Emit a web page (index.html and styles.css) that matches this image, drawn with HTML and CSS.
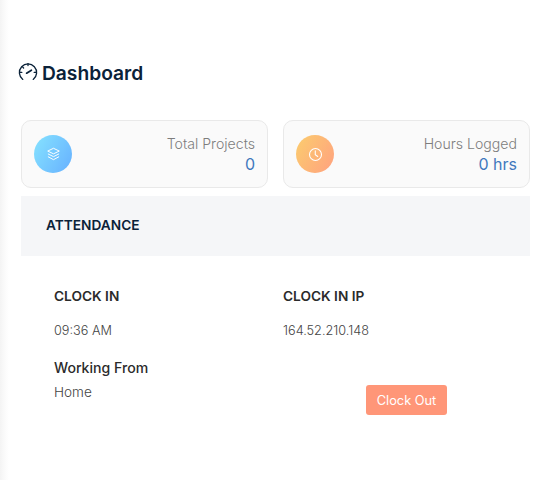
FILE: index.html
```html
<!DOCTYPE html>
<html lang="en">
<head>
  <meta charset="UTF-8" />
  <title>Dashboard</title>
  <link rel="stylesheet" href="styles.css">
</head>
<body>
  <main class="content">
    <h1 class="page-title">
      <svg class="title-icon" viewBox="0 0 20 20" fill="none" stroke="#0b2239" stroke-width="1.3" stroke-linecap="round">
        <path d="M4.8 17.4a8.6 8.6 0 1 1 10.4 0"/>
        <path d="M10 1.6v2M2.2 10.4h1.6M16.2 10.4h1.6M4.5 4.9l1.1 1.1"/>
        <path d="M8.6 11.2l4.8-3" stroke-width="1.7"/>
      </svg>
      Dashboard
    </h1>

    <div class="stats">
      <div class="stat-card">
        <div class="stat-icon icon-blue">
          <svg viewBox="0 0 14 14" fill="none" stroke="#fff" stroke-width="0.9" stroke-linejoin="round">
            <path d="M7 1.2l5.4 2.6L7 6.4 1.6 3.8z"/>
            <path d="M1.8 6.4L7 9l5.2-2.6"/>
            <path d="M1.8 9L7 11.8 12.2 9"/>
          </svg>
        </div>
        <div class="stat-text">
          <div class="stat-label">Total Projects</div>
          <div class="stat-value">0</div>
        </div>
      </div>
      <div class="stat-card">
        <div class="stat-icon icon-orange">
          <svg viewBox="0 0 14 14" fill="none" stroke="#fff" stroke-width="1" stroke-linecap="round">
            <circle cx="7" cy="7" r="5.6"/>
            <path d="M6.8 3.6v3.6l2.3 1.7"/>
          </svg>
        </div>
        <div class="stat-text">
          <div class="stat-label">Hours Logged</div>
          <div class="stat-value">0 hrs</div>
        </div>
      </div>
    </div>

    <section class="panel">
      <div class="panel-heading">ATTENDANCE</div>
      <div class="panel-body">
        <div class="attendance-col">
          <h4 class="col-title">CLOCK IN</h4>
          <p class="col-text">09:36 AM</p>
          <h5 class="from-title">Working From</h5>
          <p class="from-text">Home</p>
        </div>
        <div class="attendance-col">
          <h4 class="col-title">CLOCK IN IP</h4>
          <p class="col-text">164.52.210.148</p>
          <button class="clock-btn">Clock Out</button>
        </div>
      </div>
    </section>
  </main>
</body>
</html>
```

FILE: styles.css
```css
* {
  box-sizing: border-box;
  margin: 0;
  padding: 0;
  font-family: 'Inter', 'Open Sans', sans-serif;
}

body {
  width: 540px;
  height: 480px;
  overflow: hidden;
  background: linear-gradient(to right, #f4f4f4, #fbfbfb 5px, #fff 9px);
  color: #333;
}

.content {
  padding: 60px 10px 0 21px;
}

.page-title {
  display: flex;
  align-items: center;
  height: 26px;
  margin-left: -3px;
  font-size: 19.2px;
  font-weight: 600;
  color: #0b2239;
}

.title-icon {
  width: 20px;
  height: 20px;
  margin-right: 4px;
  margin-top: -2px;
}

.stats {
  display: flex;
  gap: 15px;
  margin-top: 34px;
}

.stat-card {
  display: flex;
  justify-content: space-between;
  align-items: center;
  width: 247px;
  height: 68px;
  padding: 0 12px;
  background-color: #fafafa;
  border: 1px solid #e9e9e9;
  border-radius: 10px;
}

.stat-icon {
  display: flex;
  align-items: center;
  justify-content: center;
  width: 38px;
  height: 38px;
  border-radius: 50%;
}

.stat-icon svg {
  width: 15px;
  height: 15px;
}

.icon-blue {
  background: linear-gradient(120deg, #86e3ff, #66b0ff);
}

.icon-orange {
  background: linear-gradient(120deg, #fbcd6e, #ffa17f);
}

.stat-text {
  text-align: right;
}

.stat-label {
  font-size: 14.1px;
  line-height: 20px;
  font-weight: 300;
  color: #7d7d7d;
}

.stat-value {
  font-size: 16px;
  line-height: 20px;
  font-weight: 400;
  color: #3f78bd;
}

.panel {
  margin-top: 8px;
}

.panel-heading {
  height: 60px;
  padding-left: 25px;
  line-height: 58px;
  font-size: 13.7px;
  font-weight: 600;
  color: #0b2239;
  background-color: #f5f6f8;
}

.panel-body {
  display: flex;
  padding: 32px 0 0 33px;
}

.attendance-col {
  width: 229px;
}

.col-title {
  font-size: 13.7px;
  line-height: 16px;
  font-weight: 600;
  color: #2b2b2b;
}

.col-text {
  margin-top: 19px;
  font-size: 12.7px;
  line-height: 16px;
  font-weight: 300;
  color: #444;
}

.from-title {
  margin-top: 21px;
  font-size: 14.1px;
  line-height: 16px;
  font-weight: 500;
  color: #2b2b2b;
}

.from-text {
  margin-top: 8px;
  font-size: 13.6px;
  line-height: 16px;
  font-weight: 300;
  color: #444;
}

.clock-btn {
  display: block;
  width: 81px;
  height: 30px;
  margin: 46px 0 0 83px;
  background-color: #ff9678;
  color: #fff;
  border: none;
  border-radius: 3px;
  font-size: 12.8px;
  font-weight: 400;
}
```
